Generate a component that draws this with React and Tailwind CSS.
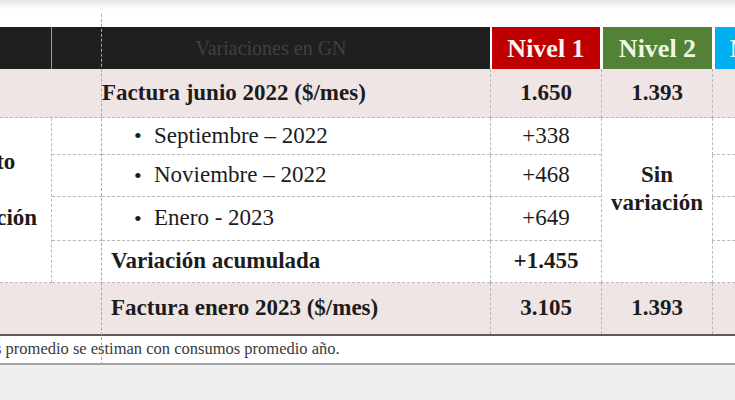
import React from 'react';

// Tabla de variaciones de factura de GN (recorte)
const cellLine = 'border-dashed border-[#b9b9b9]';

const Bullet = ({ children }) => (
  <div className="flex items-center pl-[32px] text-[23px] text-[#1c1c1c]">
    <span className="w-[20px] text-[22px] leading-none">•</span>
    <span>{children}</span>
  </div>
);

export default function App() {
  return (
    <div className="relative w-[735px] h-[400px] overflow-hidden bg-[#efefef] font-['Liberation_Serif','Times_New_Roman',serif]">
      {/* page top */}
      <div className="h-[9px] bg-linear-to-b from-[#e4e4e4] to-white" />
      <div className="h-[18px] bg-white" />

      <div className="w-[822px] bg-white border-b-2 border-[#5c5c5c] grid grid-cols-[52px_50px_388px_111px_111px_110px] grid-rows-[42px_49px_37px_42px_44px_42px_51px] text-[#1c1c1c]">
        {/* header */}
        <div className="bg-[#1f1f1f] border-r border-[#9c9c9c]" />
        <div className="col-span-2 bg-[#1f1f1f] flex items-center justify-center text-[20px] text-[#404040]">
          Variaciones en GN
        </div>
        <div className="bg-[#c00000] border-l-2 border-r border-white flex items-center justify-center font-bold text-[26px] text-[#fff4f4]">
          Nivel 1
        </div>
        <div className="bg-[#538135] border-l-2 border-white flex items-center justify-center font-bold text-[26px] text-[#eef8e6]">
          Nivel 2
        </div>
        <div className="bg-[#00b0f0] border-l-[3px] border-white overflow-hidden flex items-center justify-center font-bold text-[26px] text-white">
          Nivel 3
        </div>

        {/* factura junio */}
        <div className={`col-span-2 bg-[#f0e5e5] border-b ${cellLine}`} />
        <div className={`bg-[#f0e5e5] border-b ${cellLine} flex items-center font-bold text-[23px]`}>
          Factura junio 2022 ($/mes)
        </div>
        <div className={`bg-[#f0e5e5] border-b border-l ${cellLine} flex items-center justify-center font-bold text-[23px]`}>
          1.650
        </div>
        <div className={`bg-[#f0e5e5] border-b border-l ${cellLine} flex items-center justify-center font-bold text-[23px]`}>
          1.393
        </div>
        <div className={`bg-[#f0e5e5] border-b border-l ${cellLine}`} />

        {/* septiembre */}
        <div className={`row-span-4 border-r border-b ${cellLine} overflow-hidden flex items-center`}>
          <div className="w-[160px] ml-[-110px] shrink-0 flex flex-col gap-[28px] text-center font-bold text-[23px] leading-[28px] pb-[20px]">
            <span>Aumento</span>
            <span>Actualización</span>
          </div>
        </div>
        <div className={`border-b ${cellLine}`} />
        <div className={`border-b ${cellLine} flex items-center`}>
          <Bullet>Septiembre – 2022</Bullet>
        </div>
        <div className={`border-b border-l ${cellLine} flex items-center justify-center text-[23px]`}>+338</div>
        <div className={`row-span-4 border-b border-l ${cellLine} flex items-center justify-center pb-[22px]`}>
          <div className="text-center font-bold text-[23px] leading-[28px]">
            Sin
            <br />
            variación
          </div>
        </div>
        <div className={`border-b border-l ${cellLine}`} />

        {/* noviembre */}
        <div className={`border-b ${cellLine}`} />
        <div className={`border-b ${cellLine} flex items-center`}>
          <Bullet>Noviembre – 2022</Bullet>
        </div>
        <div className={`border-b border-l ${cellLine} flex items-center justify-center text-[23px]`}>+468</div>
        <div className={`border-b border-l ${cellLine}`} />

        {/* enero */}
        <div className={`border-b ${cellLine}`} />
        <div className={`border-b ${cellLine} flex items-center`}>
          <Bullet>Enero - 2023</Bullet>
        </div>
        <div className={`border-b border-l ${cellLine} flex items-center justify-center text-[23px]`}>+649</div>
        <div className={`border-b border-l ${cellLine}`} />

        {/* variación acumulada */}
        <div className={`border-b ${cellLine}`} />
        <div className={`border-b ${cellLine} flex items-center pl-[9px] font-bold text-[23px]`}>
          Variación acumulada
        </div>
        <div className={`border-b border-l ${cellLine} flex items-center justify-center font-bold text-[23px]`}>
          +1.455
        </div>
        <div className={`border-b border-l ${cellLine}`} />

        {/* factura enero */}
        <div className="col-span-2 bg-[#f0e5e5]" />
        <div className="bg-[#f0e5e5] flex items-center pl-[9px] font-bold text-[23px]">
          Factura enero 2023 ($/mes)
        </div>
        <div className={`bg-[#f0e5e5] border-l ${cellLine} flex items-center justify-center font-bold text-[23px]`}>
          3.105
        </div>
        <div className={`bg-[#f0e5e5] border-l ${cellLine} flex items-center justify-center font-bold text-[23px]`}>
          1.393
        </div>
        <div className={`bg-[#f0e5e5] border-l ${cellLine}`} />
      </div>

      {/* nota al pie */}
      <div className="h-[29px] bg-white border-b-2 border-[#a3a3a3] flex items-center text-[16.5px] text-[#3a3a3a] whitespace-nowrap">
        <span className="ml-[-5px]">s promedio se estiman con consumos promedio año.</span>
      </div>

      {/* guía vertical del documento */}
      <div className="absolute left-[101px] top-[14px] h-[351px] border-l border-dashed border-[#a9a9a9]" />
    </div>
  );
}
